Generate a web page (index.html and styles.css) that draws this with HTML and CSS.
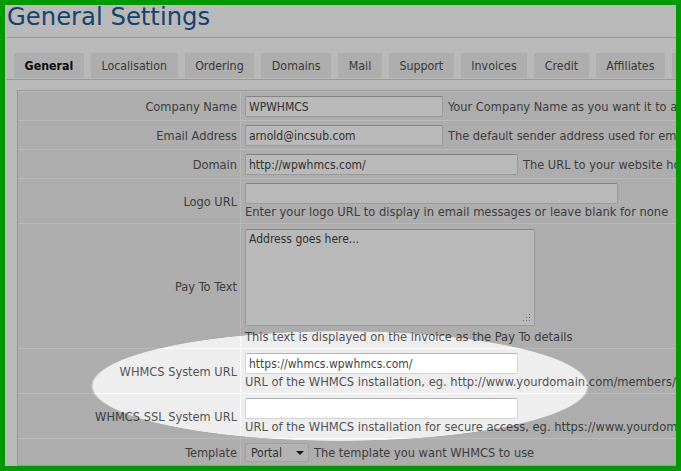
FILE: index.html
```html
<!DOCTYPE html>
<html>
<head>
<meta charset="utf-8">
<title>General Settings</title>
<link rel="stylesheet" href="styles.css">
</head>
<body>
<div class="frame">
  <div class="page">
    <h1 class="title">General Settings</h1>
    <ul class="tabs">
      <li class="tab active">General</li>
      <li class="tab">Localisation</li>
      <li class="tab">Ordering</li>
      <li class="tab">Domains</li>
      <li class="tab">Mail</li>
      <li class="tab">Support</li>
      <li class="tab">Invoices</li>
      <li class="tab">Credit</li>
      <li class="tab">Affiliates</li>
      <li class="tab">Other</li>
    </ul>
    <div class="form">
      <div class="label">Company Name</div>
      <div class="field inline"><input class="input w-sm" value="WPWHMCS"><span class="desc">Your Company Name as you want it to appear throughout the system</span></div>

      <div class="label">Email Address</div>
      <div class="field inline"><input class="input w-sm" value="arnold@incsub.com"><span class="desc">The default sender address used for emails sent by WHMCS</span></div>

      <div class="label">Domain</div>
      <div class="field inline"><input class="input w-md" value="http://wpwhmcs.com/"><span class="desc">The URL to your website homepage</span></div>

      <div class="label">Logo URL</div>
      <div class="field"><input class="input w-lg" value=""><div class="help">Enter your logo URL to display in email messages or leave blank for none</div></div>

      <div class="label">Pay To Text</div>
      <div class="field">
        <div class="textarea">Address goes here...
          <svg class="grip" width="8" height="8" viewBox="0 0 8 8"><g fill="#9a9a9a"><rect x="6" y="0" width="1" height="1"/><rect x="6" y="3" width="1" height="1"/><rect x="3" y="3" width="1" height="1"/><rect x="6" y="6" width="1" height="1"/><rect x="3" y="6" width="1" height="1"/><rect x="0" y="6" width="1" height="1"/></g></svg>
        </div>
        <div class="help">This text is displayed on the invoice as the Pay To details</div>
      </div>

      <div class="label">WHMCS System URL</div>
      <div class="field"><input class="input w-md" value="https://whmcs.wpwhmcs.com/"><div class="help">URL of the WHMCS installation, eg. http://www.yourdomain.com/members/</div></div>

      <div class="label">WHMCS SSL System URL</div>
      <div class="field"><input class="input w-md" value=""><div class="help">URL of the WHMCS installation for secure access, eg. https://www.yourdomain.com/members/</div></div>

      <div class="label">Template</div>
      <div class="field inline"><div class="select"><span>Portal</span><span class="caret"></span></div><span class="desc">The template you want WHMCS to use</span></div>
    </div>
  </div>
  <div class="spotlight"></div>
</div>
</body>
</html>
```
FILE: styles.css
```css
body {
  margin: 0;
}

.frame {
  position: relative;
  width: 681px;
  height: 471px;
  box-sizing: border-box;
  border: 5px solid #009900;
  overflow: hidden;
  background: #fff;
  font-family: "DejaVu Sans Condensed", "DejaVu Sans", sans-serif;
  font-stretch: condensed;
}

.page {
  width: 900px;
  padding-left: 2px;
}

.title {
  margin: 0;
  padding: 0 0 8px 0;
  font-family: "DejaVu Sans", sans-serif;
  font-stretch: normal;
  font-weight: normal;
  font-size: 24.3px;
  line-height: 24px;
  color: #23599a;
  border-bottom: 1px solid #d2d2d2;
}

.tabs {
  list-style: none;
  margin: 15px 0 0;
  padding: 0 0 1px 7px;
  display: flex;
  gap: 7px;
  border-bottom: 1px solid #d2d2d2;
}

.tab {
  height: 25px;
  box-sizing: border-box;
  padding: 2px 10.6px 0;
  line-height: 23px;
  font-size: 12.3px;
  background: #efefef;
  color: #4e4e4e;
  white-space: nowrap;
}

.tab.active {
  font-weight: bold;
  color: #111;
}

.form {
  margin: 10px 0 0 10px;
  width: 860px;
  display: grid;
  grid-template-columns: 222px 1fr;
  gap: 1px;
  padding-top: 1px;
  border: 1px solid #d0d0d0;
  background: #fff;
  font-size: 12.7px;
  color: #555;
}

.label {
  background: #eee;
  display: flex;
  align-items: center;
  justify-content: flex-end;
  padding-right: 3px;
  white-space: nowrap;
}

.field {
  background: #eee;
  padding: 4px 4px 3px;
  white-space: nowrap;
}

.field.inline {
  display: flex;
  align-items: center;
}

.input {
  display: block;
  box-sizing: border-box;
  height: 21px;
  margin: 0;
  padding: 0 3px;
  border: 1px solid #d4d4d4;
  border-top-color: #b4b4b4;
  border-radius: 2px;
  background: #fff;
  font-family: "DejaVu Sans Condensed", "DejaVu Sans", sans-serif;
  font-stretch: condensed;
  font-size: 12px;
  color: #444;
  outline: none;
}

.w-sm { width: 198px; }
.w-md { width: 273px; }
.w-lg { width: 373px; }

.desc {
  margin-left: 5px;
}

.help {
  font-size: 12.8px;
  line-height: 16px;
}

.textarea {
  position: relative;
  width: 290px;
  height: 97px;
  box-sizing: border-box;
  margin: 1px 0 3px;
  padding: 2px 3px;
  border: 1px solid #d4d4d4;
  border-top-color: #b4b4b4;
  border-radius: 2px;
  background: #fff;
  font-size: 12px;
  line-height: 15px;
  color: #444;
}

.grip {
  position: absolute;
  right: 3px;
  bottom: 3px;
}

.select {
  display: flex;
  align-items: center;
  justify-content: space-between;
  width: 64px;
  height: 19px;
  box-sizing: border-box;
  padding: 0 4px 0 5px;
  border: 1px solid #dcdcdc;
  border-radius: 2px;
  background: #f6f6f6;
  font-size: 12px;
  color: #444;
}

.caret {
  width: 0;
  height: 0;
  border-left: 4px solid transparent;
  border-right: 4px solid transparent;
  border-top: 4px solid #222;
}

.spotlight {
  position: absolute;
  inset: 0;
  pointer-events: none;
  background: radial-gradient(ellipse 249px 55px at 335px 381px, rgba(0, 0, 0, 0) 99%, rgba(0, 0, 0, 0.275) 100%);
}
```
